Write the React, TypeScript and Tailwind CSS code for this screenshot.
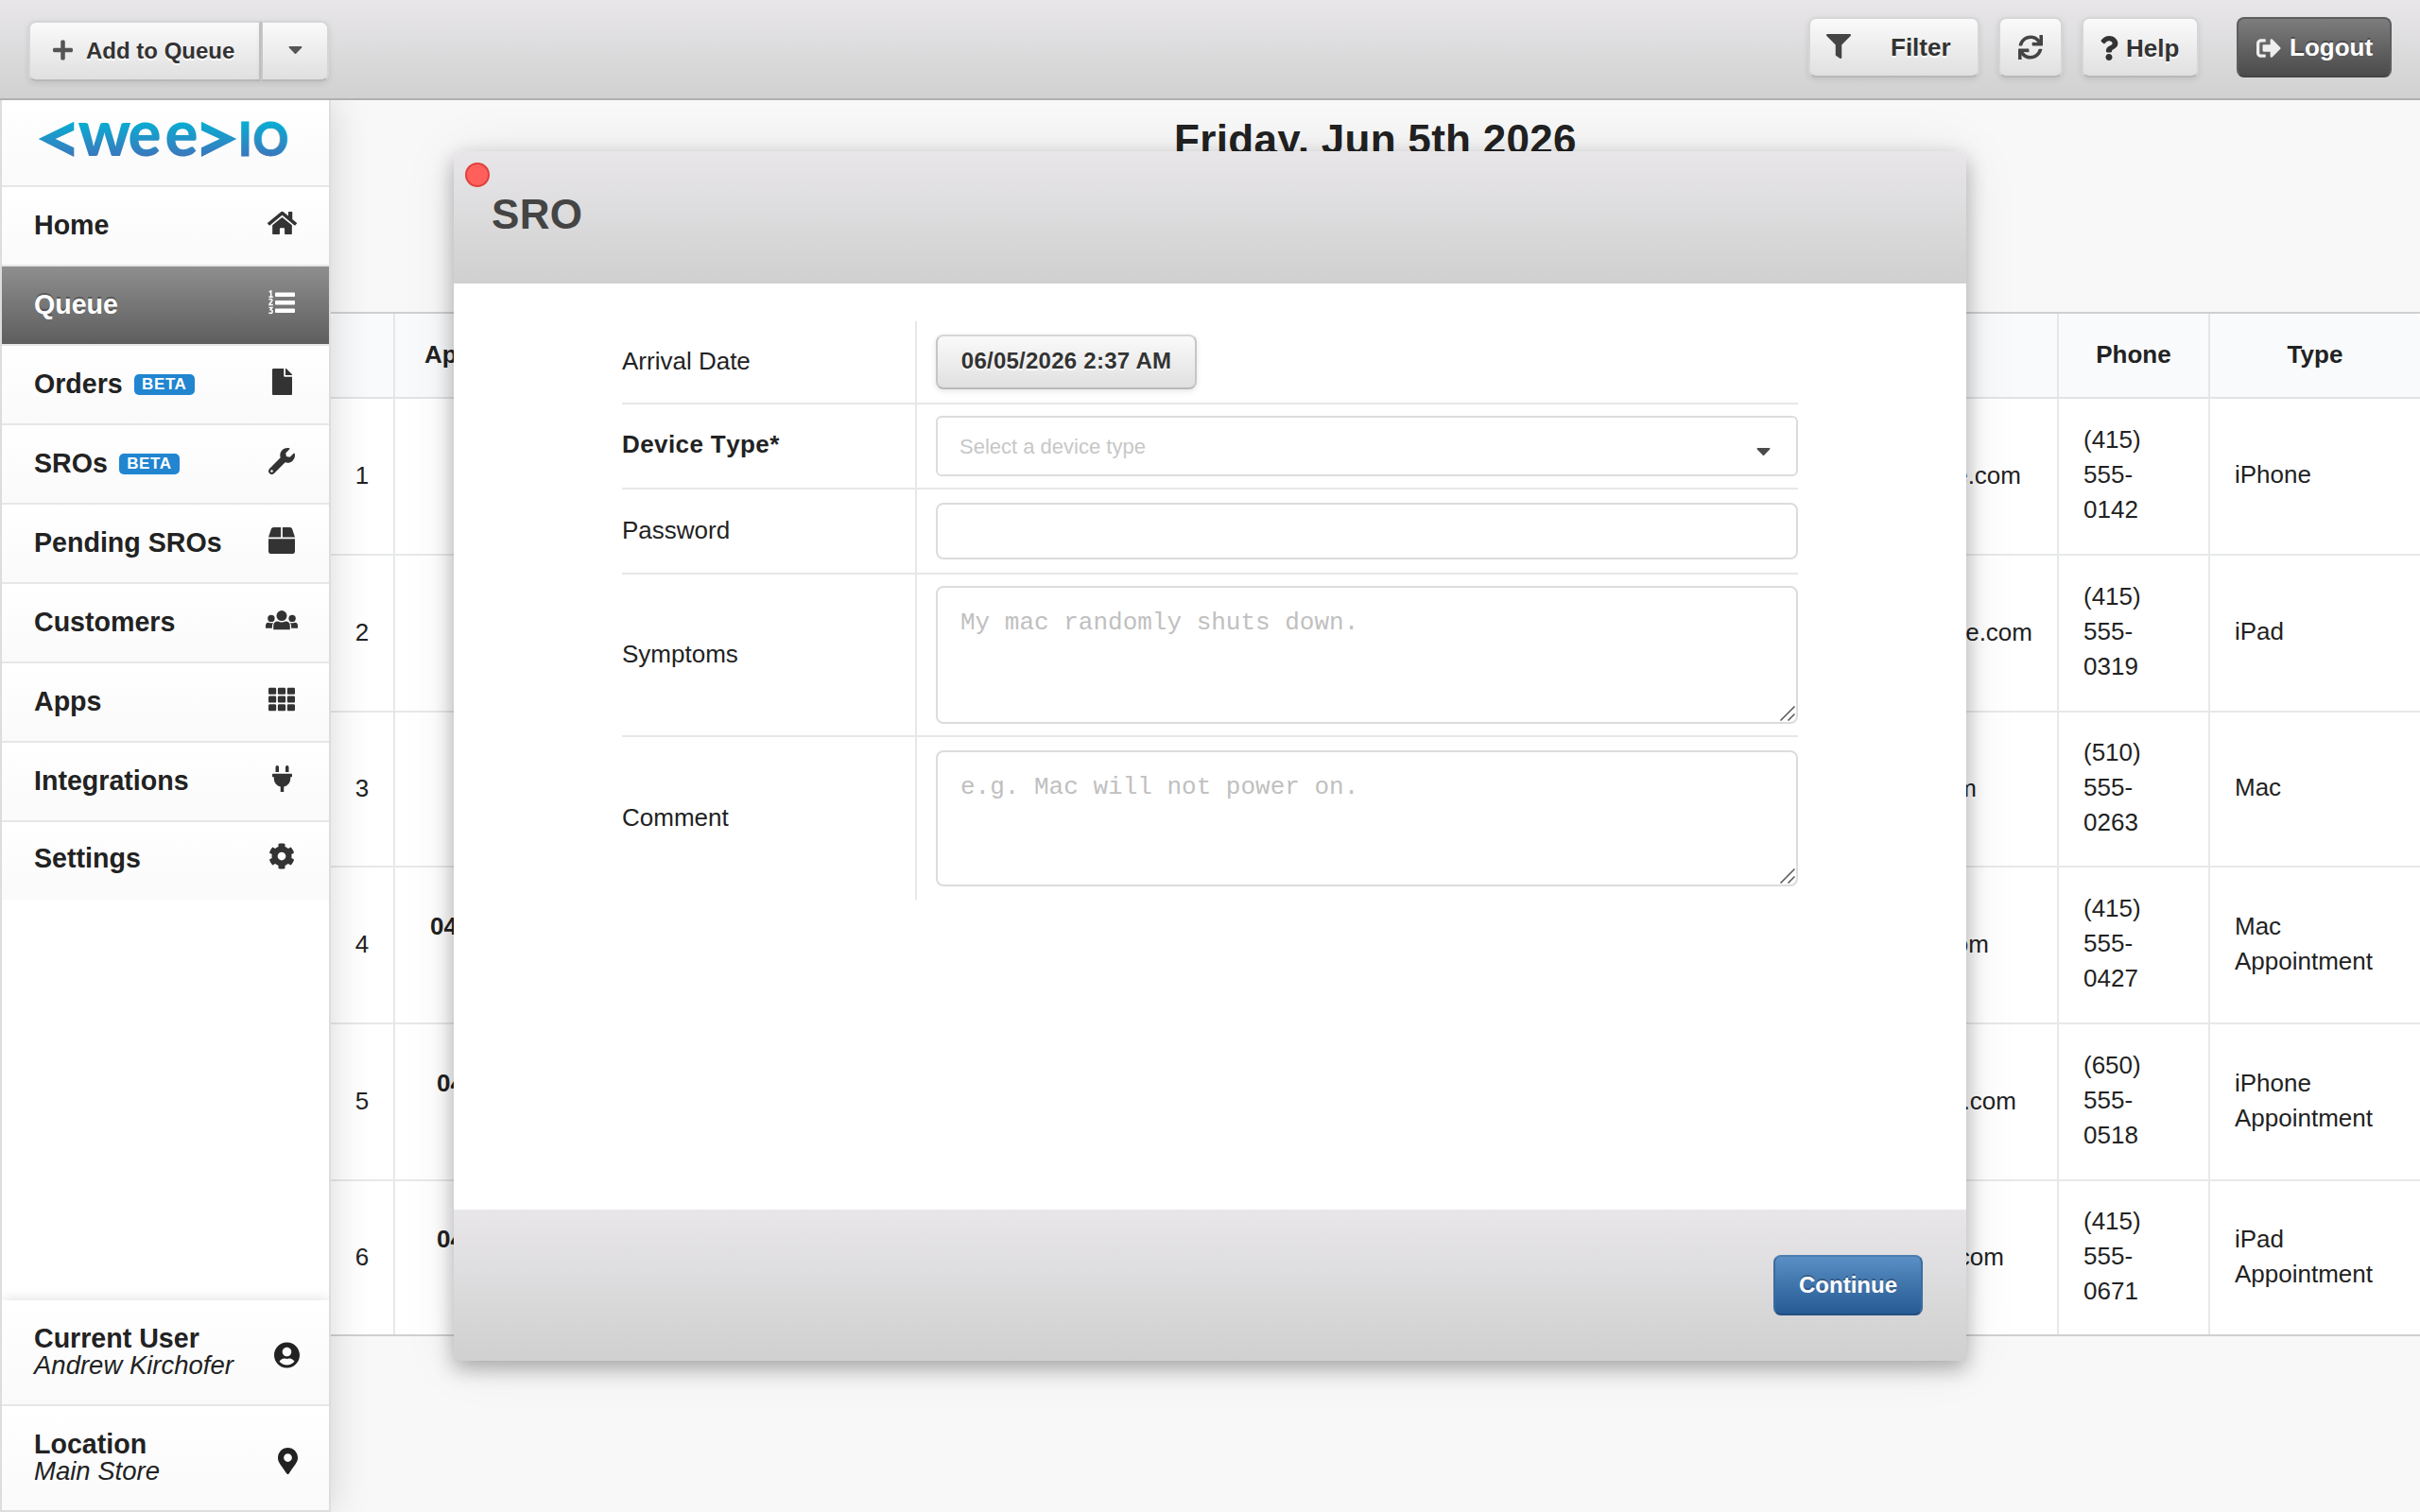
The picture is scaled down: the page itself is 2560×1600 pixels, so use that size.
import React from "react";
import {
  FaPlus, FaCaretDown, FaFilter, FaSync, FaQuestion, FaSignOutAlt, FaHome, FaFile,
  FaWrench, FaBox, FaTh, FaPlug, FaCog, FaUserCircle, FaMapMarkerAlt,
} from "react-icons/fa";

const lightButton =
  "flex items-center border-2 border-[#d6d6d6] border-b-[#b8b8b8] bg-linear-to-b from-[#fafafa] to-[#e0e0e0] font-bold text-[#333] [text-shadow:0_2px_0_#fff] shadow-[0_2px_6px_rgba(0,0,0,0.1)]";

function Logo() {
  return (
    <svg className="block h-[44px] w-[270px] overflow-visible" viewBox="0 0 270 44">
      <defs>
        <linearGradient id="brand" gradientUnits="userSpaceOnUse" x1="0" y1="2" x2="0" y2="40">
          <stop offset="0" stopColor="#06afd3" />
          <stop offset="1" stopColor="#3c76bc" />
        </linearGradient>
      </defs>
      <g fill="url(#brand)" fontFamily="Lato" fontWeight="900">
        <polygon points="0.7,21 38.3,2.7 38.3,12 18.7,21 38.3,30.3 38.3,40" />
        <text x="42.5" y="39" fontSize="69" textLength="56" lengthAdjust="spacingAndGlyphs">w</text>
        <text x="95.5" y="39" fontSize="69" textLength="35" lengthAdjust="spacingAndGlyphs">e</text>
        <text x="134.6" y="39" fontSize="69" textLength="35" lengthAdjust="spacingAndGlyphs">e</text>
        <polygon points="210.3,21 173,2.7 173,12 192.5,21 173,30.3 173,40" />
        <g stroke="url(#brand)" strokeWidth="0.8">
          <text x="212" y="39" fontSize="48.5">I</text>
          <text x="227.5" y="39" fontSize="48.5" textLength="37.5" lengthAdjust="spacingAndGlyphs">O</text>
        </g>
      </g>
    </svg>
  );
}

function NumberedListIcon() {
  return (
    <svg className="h-[28px] w-[28px]" viewBox="0 0 28 28">
      <g fill="currentColor">
        <rect x="7" y="3.6" width="21" height="4.4" rx="0.9" />
        <rect x="7" y="12" width="21" height="4.4" rx="0.9" />
        <rect x="7" y="20.6" width="21" height="4.4" rx="0.9" />
      </g>
      <g fill="none" stroke="currentColor" strokeWidth="1.5">
        <path d="M0.7 3 2.7 1.9V8M0.4 8.2H4.8" />
        <path d="M0.5 11.2C1.6 10 4 10.2 3.9 11.9 3.8 13.3 1.2 14.6 1 16.4H4.8" />
        <path d="M0.5 19.4H3.8L2.2 21.7C4.8 21.9 4.7 25.4 2.3 25.4 1.4 25.4 0.8 25.2 0.3 24.8" />
      </g>
    </svg>
  );
}

function GroupIcon() {
  return (
    <svg className="h-[28px] w-[34px]" viewBox="0 0 34 28" fill="currentColor">
      <circle cx="17" cy="9.6" r="5.5" />
      <circle cx="5.9" cy="12.4" r="3.7" />
      <circle cx="28.1" cy="12.4" r="3.7" />
      <path d="M8.2 24.2V20.6Q8.2 15.6 13 15.6Q17 17.4 21 15.6Q25.8 15.6 25.8 20.6V24.2Z" />
      <path d="M0 22.8V20.2Q0 16.8 3.2 16.8Q5.4 17.8 8 16.9Q6.9 18.6 6.9 20.6V22.8Z" />
      <path d="M34 22.8V20.2Q34 16.8 30.8 16.8Q28.6 17.8 26 16.9Q27.1 18.6 27.1 20.6V22.8Z" />
    </svg>
  );
}

function TopBar() {
  return (
    <header className="relative z-20 flex h-[106px] items-start justify-between border-b-2 border-[#b0b0b0] bg-linear-to-b from-[#e8e6e9] to-[#d1d1d1] pr-[30px] pl-[30px]">
      <div className="mt-[22px] flex text-[24px]">
        <button className={`${lightButton} h-[64px] w-[246px] rounded-l-[8px] border-r-[#c6c6c6] pl-[24px]`}>
          <FaPlus className="mr-[14px] mb-[2px] h-[24px] w-[21px] text-[#555]" />
          Add to Queue
        </button>
        <button className={`${lightButton} h-[64px] w-[72px] justify-center rounded-r-[8px] border-l-[#c6c6c6] pb-[4px]`}>
          <FaCaretDown className="h-[24px] w-[15px] text-[#555]" />
        </button>
      </div>
      <div className="mt-[18px] flex text-[26px]">
        <button className={`${lightButton} h-[64px] w-[181px] rounded-[8px] pt-px pl-[17px]`}>
          <FaFilter className="mr-[42px] mb-[4px] h-[26px] w-[26px] text-[#444]" />
          Filter
        </button>
        <button className={`${lightButton} ml-[20px] h-[64px] w-[68px] justify-center rounded-[8px]`}>
          <FaSync className="h-[26px] w-[26px] text-[#444]" />
        </button>
        <button className={`${lightButton} ml-[20px] h-[64px] w-[124px] rounded-[8px] pt-[3px] pl-[17px]`}>
          <FaQuestion className="mr-[8px] mb-[2px] h-[26px] w-[20px] text-[#333]" />
          Help
        </button>
        <button className="ml-[40px] flex h-[64px] w-[164px] items-center rounded-[8px] border-2 border-[#5e5e5e] border-b-[#444] bg-linear-to-b from-[#7d7d7d] to-[#4b4b4b] pt-px pl-[19px] font-bold text-white [text-shadow:0_-2px_0_rgba(0,0,0,0.3)]">
          <FaSignOutAlt className="mr-[9px] h-[26px] w-[26px] text-[#eee]" />
          Logout
        </button>
      </div>
    </header>
  );
}

const nav = [
  { label: "Home", icon: <FaHome className="h-[28px] w-[31px]" /> },
  { label: "Queue", icon: <NumberedListIcon />, active: true },
  { label: "Orders", beta: true, icon: <FaFile className="h-[28px] w-[21px]" /> },
  { label: "SROs", beta: true, icon: <FaWrench className="h-[28px] w-[28px]" /> },
  { label: "Pending SROs", icon: <FaBox className="h-[28px] w-[28px]" /> },
  { label: "Customers", icon: <GroupIcon /> },
  { label: "Apps", icon: <FaTh className="h-[28px] w-[28px]" /> },
  { label: "Integrations", icon: <FaPlug className="h-[28px] w-[21px]" /> },
  { label: "Settings", icon: <FaCog className="h-[28px] w-[28px]" />, last: true },
];

function Sidebar() {
  return (
    <aside className="relative z-10 flex w-[350px] shrink-0 flex-col border-x-2 border-b-2 border-[#ddd] bg-white text-[#222] shadow-[0_0_40px_rgba(0,0,0,0.16)]">
      <div className="h-[92px] border-b-2 border-[#e7e7e7] bg-linear-to-b from-white to-[#fafafa] pt-[20px] pl-[38px]">
        <Logo />
      </div>
      <nav>
        {nav.map((n) => (
          <div
            key={n.label}
            className={`flex items-center pl-[34px] text-[28.6px] font-bold ${n.last ? "h-[82px] pb-[5px]" : "h-[84px] border-b-2 border-[#e7e7e7] pb-px"} ${
              n.active
                ? "bg-linear-to-b from-[#8f8f8f] to-[#5e5e5e] bg-clip-padding text-white [text-shadow:0_-2px_0_rgba(0,0,0,0.3)]"
                : "bg-linear-to-b from-white to-[#fafafa] text-[#222]"
            }`}
          >
            {n.label}
            {n.beta && (
              <span className="ml-[12px] flex h-[22px] w-[64px] items-center justify-center rounded-[5px] bg-[#2185d0] text-[17px] tracking-[0.6px] text-white">
                BETA
              </span>
            )}
            <span className={`mr-[30px] mb-[5px] ml-auto flex w-[40px] justify-center ${n.active ? "text-white" : "text-[#333]"}`}>{n.icon}</span>
          </div>
        ))}
      </nav>
      <div className="mt-auto shadow-[0_0_14px_rgba(0,0,0,0.14)] [clip-path:inset(-20px_0_0_0)]">
        <div className="flex h-[112px] items-center border-b-2 border-[#e7e7e7] bg-linear-to-b from-white to-[#fafafa] pr-[31px] pl-[34px]">
          <div className="leading-[28.6px]">
            <div className="text-[28.6px] font-bold">Current User</div>
            <div className="text-[27.5px] italic">Andrew Kirchofer</div>
          </div>
          <FaUserCircle className="mt-[5px] ml-auto h-[28px] w-[27px]" />
        </div>
        <div className="flex h-[110px] items-center bg-linear-to-b from-white to-[#fafafa] pr-[33px] pl-[34px]">
          <div className="leading-[28.6px]">
            <div className="text-[28.6px] font-bold">Location</div>
            <div className="text-[27.5px] italic">Main Store</div>
          </div>
          <FaMapMarkerAlt className="mt-[5px] ml-auto h-[28px] w-[21px]" />
        </div>
      </div>
    </aside>
  );
}

const rows = [
  { n: 1, h: 166, date: "", left: 0, right: 38, phone: ["(415)", "555-", "0142"], type: ["iPhone"] },
  { n: 2, h: 166, date: "", left: 0, right: 26, phone: ["(415)", "555-", "0319"], type: ["iPad"] },
  { n: 3, h: 164, date: "", left: 0, right: 85, phone: ["(510)", "555-", "0263"], type: ["Mac"] },
  { n: 4, h: 166, date: "04/10/2026", left: 37, right: 72, phone: ["(415)", "555-", "0427"], type: ["Mac", "Appointment"] },
  { n: 5, h: 166, date: "04/9/2026", left: 44, right: 43, phone: ["(650)", "555-", "0518"], type: ["iPhone", "Appointment"] },
  { n: 6, h: 164, date: "04/8/2026", left: 44, right: 56, phone: ["(415)", "555-", "0671"], type: ["iPad", "Appointment"] },
];

function QueueTable() {
  return (
    <div className="mt-[174px] border-y-2 border-[#d0d0d1] bg-white text-[26px] leading-[37px]">
      <div className="grid h-[90px] grid-cols-[68px_1fr_160px_222px] rounded-t-[8px] border-b-2 border-[#e2e3e4] bg-[#f9fafc] font-bold">
        <div className="border-r-2 border-[#e5e6e7]" />
        <div className="flex items-center border-r-2 border-[#e5e6e7] pb-[2px] pl-[31px]">Appointment</div>
        <div className="flex items-center justify-center border-r-2 border-[#e5e6e7] pb-[2px]">Phone</div>
        <div className="flex items-center justify-center pb-[2px]">Type</div>
      </div>
      {rows.map((r) => (
        <div
          key={r.n}
          className="grid grid-cols-[68px_1fr_160px_222px] border-b-2 border-[#e7e8e8] last:border-b-0"
          style={{ height: r.n === 6 ? r.h - 2 : r.h }}
        >
          <div className="flex items-center justify-center border-r-2 border-[#e7e8e8] pb-[2px]">{r.n}</div>
          <div className="flex items-center justify-between border-r-2 border-[#e7e8e8] pb-[2px]">
            <div className="h-[74px] font-bold" style={{ paddingLeft: r.left }}>{r.date}</div>
            <div style={{ paddingRight: r.right }}>example.com</div>
          </div>
          <div className="flex flex-col justify-center border-r-2 border-[#e7e8e8] pb-[3px] pl-[26px]">
            {r.phone.map((p) => <div key={p}>{p}</div>)}
          </div>
          <div className="flex flex-col justify-center pb-[3px] pl-[26px]">
            {r.type.map((t) => <div key={t}>{t}</div>)}
          </div>
        </div>
      ))}
    </div>
  );
}

function Field({ label, bold, className, children }: { label: string; bold?: boolean; className: string; children: React.ReactNode }) {
  return (
    <div className={`flex border-[#e7e7e7] ${className}`}>
      <div className={`flex w-[312px] items-center border-r-2 border-[#e7e7e7] ${bold ? "pb-[3px] font-bold tracking-[0.4px] [font-kerning:none]" : "pb-[2px]"}`}>{label}</div>
      <div className="flex flex-1 items-center pl-[20px]">{children}</div>
    </div>
  );
}

function TextArea({ text, className }: { text: string; className: string }) {
  return (
    <div className={`flex w-full justify-between rounded-[8px] border-2 border-[#dcdcdc] pt-[22px] pl-[24px] font-['Liberation_Mono',monospace] text-[26px] leading-[30px] text-[#c0c0c0] ${className}`}>
      {text}
      <svg className="mr-px mb-px h-[16px] w-[16px] self-end" viewBox="0 0 16 16" stroke="#555" strokeWidth="1.5">
        <path d="M0.5 15.5 15.5 0.5M8.5 15.5 15.5 8.5" />
      </svg>
    </div>
  );
}

function Modal() {
  return (
    <div className="absolute top-[160px] left-[480px] z-30 flex h-[1280px] w-[1600px] flex-col rounded-t-[10px] bg-white shadow-[0_8px_22px_rgba(0,0,0,0.3),0_2px_60px_rgba(0,0,0,0.08)]">
      <div className="relative h-[140px] rounded-t-[10px] bg-linear-to-b from-[#e8e6e9] to-[#d0d0d0]">
        <span className="absolute top-[12px] left-[12px] h-[26px] w-[26px] rounded-full border-2 border-[#e0403c] bg-[#ff605c]" />
        <h2 className="pt-[42px] pl-[40px] text-[44px] leading-[50px] font-bold tracking-[0.3px] text-[#444]">SRO</h2>
      </div>
      <div className="flex-1 pt-[40px] pl-[178px] text-[26px] text-[#222]">
        <div className="w-[1244px]">
          <Field label="Arrival Date" className="h-[88px] border-b-2">
            <button className={`${lightButton} h-[58px] w-[276px] justify-center rounded-[8px] border-x-[#c6c6c6] pb-[2px] text-[24px] tracking-[0.25px]`}>
              06/05/2026 2:37 AM
            </button>
          </Field>
          <Field label="Device Type*" bold className="h-[90px] border-b-2">
            <div className="flex h-[64px] w-full items-center justify-between rounded-[6px] border-2 border-[#dcdcdc] pr-[27px] pl-[23px] text-[22px] text-[#c7c7c7]">
              Select a device type
              <FaCaretDown className="mt-[10px] h-[24px] w-[15px] text-[#4a4a4a]" />
            </div>
          </Field>
          <Field label="Password" className="h-[90px] border-b-2">
            <div className="h-[60px] w-full rounded-[8px] border-2 border-[#dcdcdc]" />
          </Field>
          <Field label="Symptoms" className="h-[172px] border-b-2">
            <TextArea text="My mac randomly shuts down." className="h-[146px]" />
          </Field>
          <Field label="Comment" className="h-[172px]">
            <TextArea text="e.g. Mac will not power on." className="h-[144px]" />
          </Field>
        </div>
      </div>
      <div className="flex h-[160px] justify-end bg-linear-to-b from-[#e8e6e9] to-[#d0d0d0] pt-[48px] pr-[46px]">
        <button className="flex h-[64px] w-[158px] items-center justify-center rounded-[8px] border-2 border-x-[#3a6c9f] border-t-[#4b7dae] border-b-[#234f7f] bg-linear-to-b from-[#598fc5] to-[#275b93] text-[24px] font-bold text-white [text-shadow:0_-2px_0_rgba(0,0,0,0.25)]">
          Continue
        </button>
      </div>
    </div>
  );
}

export default function App() {
  return (
    <div className="relative flex h-[1600px] w-[2560px] flex-col overflow-hidden bg-[#f8f8f8] font-['Liberation_Sans',Arial,sans-serif] text-[#222]">
      <TopBar />
      <div className="flex min-h-0 flex-1">
        <Sidebar />
        <main className="flex-1">
          <h1 className="mt-[17px] h-[50px] text-center text-[44px] leading-[50px] font-bold tracking-[0.3px]">Friday, Jun 5th 2026</h1>
          <div className="-mt-[17px]">
            <QueueTable />
          </div>
        </main>
      </div>
      <Modal />
    </div>
  );
}
